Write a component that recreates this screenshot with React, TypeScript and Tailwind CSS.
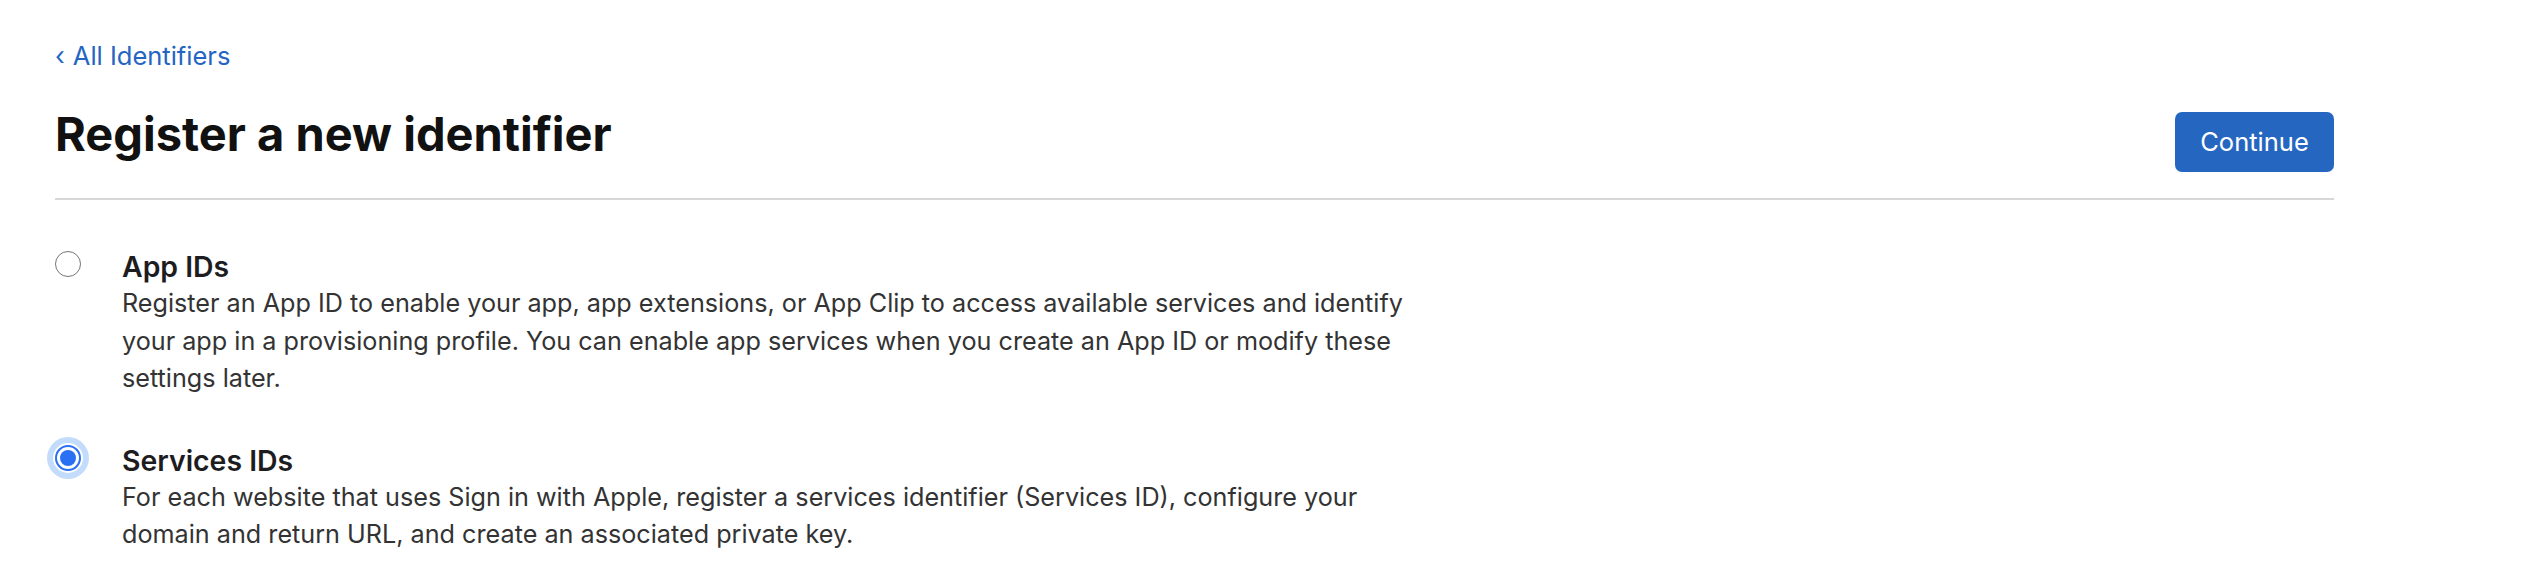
import { useState } from 'react';

const options = [
  {
    id: 'app',
    title: 'App IDs',
    text: 'Register an App ID to enable your app, app extensions, or App Clip to access available services and identify your app in a provisioning profile. You can enable app services when you create an App ID or modify these settings later.',
  },
  {
    id: 'services',
    title: 'Services IDs',
    text: 'For each website that uses Sign in with Apple, register a services identifier (Services ID), configure your domain and return URL, and create an associated private key.',
  },
];

const Radio = ({ checked, focused }: { checked: boolean; focused: boolean }) => (
  <span
    className={
      checked
        ? 'flex h-[26px] w-[26px] shrink-0 items-center justify-center rounded-full border-2 border-[#2a70f2] bg-white'
        : 'flex h-[26px] w-[26px] shrink-0 items-center justify-center rounded-full border-[1.5px] border-[#747474] bg-white'
    }
    style={focused ? { boxShadow: '0 0 0 2px #fff, 0 0 0 8px #c3dcfb' } : undefined}
  >
    {checked && <span className="h-[16px] w-[16px] rounded-full bg-[#2a70f2]" />}
  </span>
);

export default function App() {
  const [selected, setSelected] = useState('services');

  return (
    <div className="h-[580px] w-[2526px] bg-white pl-[55px] pt-[40px] font-['Inter','Liberation_Sans',sans-serif]">
      <a href="#" className="flex h-[32px] items-center gap-[8px] text-[25.5px] leading-[32px] text-[#2465c2]">
        <span>‹</span>
        <span>All Identifiers</span>
      </a>

      <div className="mt-[35px] flex w-[2279px] items-start justify-between border-b-2 border-[#d7d7d7] pb-[26px]">
        <h1 className="text-[47px] font-bold leading-[54px] text-[#111]">Register a new identifier</h1>
        <button className="mt-[5px] h-[60px] w-[159px] rounded-[7px] bg-[#2567c0] text-[25.5px] text-white">
          Continue
        </button>
      </div>

      <div className="flex flex-col gap-[44px] pt-[48px]">
        {options.map(o => (
          <div key={o.id} className="flex cursor-pointer items-start" onClick={() => setSelected(o.id)}>
            <div className="mr-[41px] mt-[3px] flex h-[26px] w-[26px] items-center">
              <Radio checked={selected === o.id} focused={selected === o.id} />
            </div>
            <div className="w-[1310px]">
              <div className="text-[28.4px] font-semibold leading-[37px] text-[#1d1d1f]">{o.title}</div>
              <p className="text-[25.2px] leading-[37.5px] text-[#333]">{o.text}</p>
            </div>
          </div>
        ))}
      </div>
    </div>
  );
}
